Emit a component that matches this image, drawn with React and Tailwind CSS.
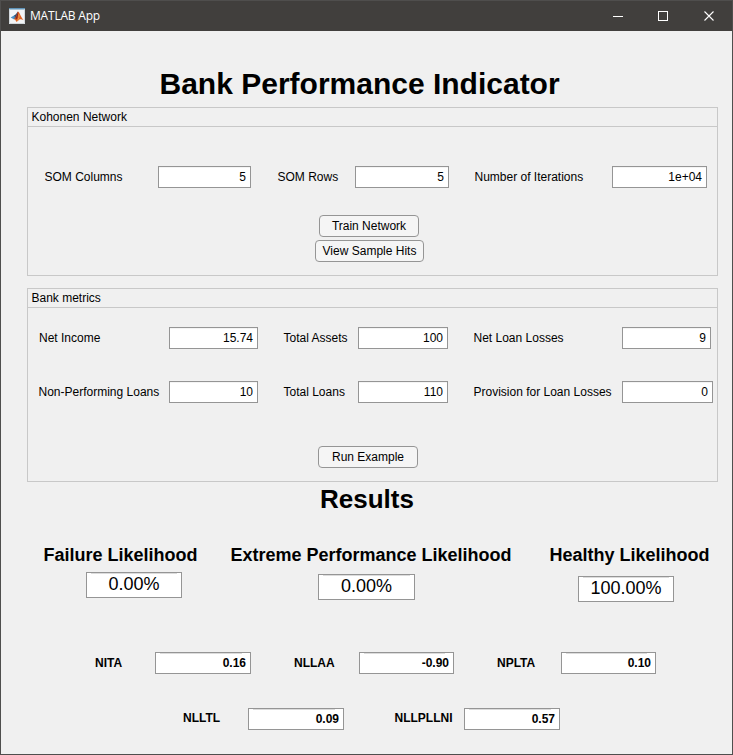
import React from 'react';

function Label({ className = '', children }) {
  return <span className={`shrink-0 whitespace-nowrap ${className}`}>{children}</span>;
}

function Field({ value, className = '' }) {
  return (
    <div
      className={`h-[22px] shrink-0 border border-[#959595] bg-white pr-1 text-right leading-5 shadow-[inset_0_1px_0_#f4f4f4] ${className}`}
    >
      {value}
    </div>
  );
}

function ReadOnlyField({ value, className = '' }) {
  return (
    <div className={`flex shrink-0 flex-col border border-[#959595] bg-white ${className}`}>
      <div className="mx-1 h-px shrink-0 bg-[#dcdcdc]" />
      <div className="-mt-px">{value}</div>
    </div>
  );
}

function Button({ className = '', children }) {
  return (
    <button
      className={`h-[22px] rounded-[4px] border border-[#959595] bg-[#f5f5f5] text-center leading-5 whitespace-nowrap ${className}`}
    >
      {children}
    </button>
  );
}

function Panel({ title, className = '', children }) {
  return (
    <section className={`ml-[26px] w-[691px] shrink-0 border border-[#c8c8c8] ${className}`}>
      <h2 className="h-[19px] border-b border-[#c8c8c8] pl-[3.5px] leading-[18px]">{title}</h2>
      {children}
    </section>
  );
}

function MatlabLogo() {
  return (
    <svg width="16" height="16" viewBox="0 0 16 16">
      <rect width="16" height="16" fill="#f3f5f7" />
      <rect width="16" height="1.5" fill="#5f93b8" />
      <path d="M0.5 1.5V15.5H15.5V1.5" fill="none" stroke="#d3d8dc" />
      <path d="M1.6 9.4L5 7.6L7 9.6L4.8 11.2Z" fill="#4a8fc4" />
      <path d="M5 7.6C7 7 7.6 4.6 9 3.6L7.6 9.8L4.8 11.2L6 9.2Z" fill="#2d4f74" />
      <path d="M9 3.6C10.8 4.6 12 9.4 14.6 12.2C12.8 11.2 11.6 10.8 10.4 11.6C9.2 12.6 8.4 13.6 7.2 13.8C6.8 12.2 6.2 11.4 4.8 11.2C7.4 9.8 7.8 5.6 9 3.6Z" fill="#df6428" />
      <path d="M9 3.6C9.5 5.2 9 9.2 7.8 11.4C7.4 10.8 6.8 10.8 6 10.6C7.8 9 8 5.4 9 3.6Z" fill="#8c2a1c" />
      <path d="M9.8 6.4C10.3 8.4 10 10.6 8.4 12.6" fill="none" stroke="#f5a94a" strokeWidth="0.9" />
    </svg>
  );
}

export default function App() {
  return (
    <div className="flex h-[755px] w-[733px] flex-col overflow-hidden border border-[#4f4e4d] bg-[#f0f0f0] font-['Liberation_Sans',Arial,sans-serif] text-[12px] text-black">
      <header className="flex h-[30px] shrink-0 items-center bg-[#413f3d] text-white">
        <div className="ml-2">
          <MatlabLogo />
        </div>
        <span className="ml-[5px] flex-1 font-['Open_Sans','Noto_Sans',sans-serif] text-[12px] leading-[30px] tracking-[-0.2px]">
          MATLAB App
        </span>
        <svg className="mr-[17px]" width="102" height="12" viewBox="0 0 102 12" fill="none" stroke="white">
          <path d="M0 6.5H10" />
          <rect x="45.5" y="1.5" width="9" height="9" />
          <path d="M91.5 1.5L100.5 10.5M100.5 1.5L91.5 10.5" strokeWidth="1.1" />
        </svg>
      </header>

      <h1 className="h-[76px] shrink-0 pt-[35px] pl-[158.5px] text-[30px] leading-[36px] font-bold whitespace-nowrap">
        Bank Performance Indicator
      </h1>

      <Panel title="Kohonen Network" className="h-[169px]">
        <div className="mt-[39px] flex leading-[22px]">
          <Label className="ml-[16.5px] w-[113.5px]">SOM Columns</Label>
          <Field value="5" className="w-[93px]" />
          <Label className="ml-[26.5px] w-[77.5px]">SOM Rows</Label>
          <Field value="5" className="w-[94px]" />
          <Label className="ml-[25.5px] w-[137.5px]">Number of Iterations</Label>
          <Field value="1e+04" className="w-[95px]" />
        </div>
        <div className="mt-[27px] ml-[287px] flex w-[109px] flex-col items-center gap-[3px]">
          <Button className="mr-[1px] w-[100px]">Train Network</Button>
          <Button className="w-[109px]">View Sample Hits</Button>
        </div>
      </Panel>

      <Panel title="Bank metrics" className="mt-3 h-[194px]">
        <div className="mt-[19px] flex leading-[22px]">
          <Label className="ml-[11px] w-[130px]">Net Income</Label>
          <Field value="15.74" className="w-[89px]" />
          <Label className="ml-[25.5px] w-[74.5px]">Total Assets</Label>
          <Field value="100" className="w-[90px]" />
          <Label className="ml-[25.5px] w-[148.5px]">Net Loan Losses</Label>
          <Field value="9" className="w-[89px]" />
        </div>
        <div className="mt-8 flex leading-[22px]">
          <Label className="ml-[10.5px] w-[130.5px]">Non-Performing Loans</Label>
          <Field value="10" className="w-[89px]" />
          <Label className="ml-[25.5px] w-[74.5px]">Total Loans</Label>
          <Field value="110" className="w-[90px]" />
          <Label className="ml-[25.5px] w-[148.5px]">Provision for Loan Losses</Label>
          <Field value="0" className="w-[91px]" />
        </div>
        <Button className="mt-[43px] ml-[290px] block w-[100px]">Run Example</Button>
      </Panel>

      <h2 className="h-[62px] shrink-0 pl-[319px] text-[26px] leading-[34px] font-bold">Results</h2>

      <div className="flex h-[108px] shrink-0 text-[18px]">
        <div className="ml-[42.5px] w-[187px]">
          <h3 className="h-[28px] leading-[22px] font-bold whitespace-nowrap">Failure Likelihood</h3>
          <ReadOnlyField value="0.00%" className="ml-[42.5px] h-[26px] w-[96px] text-center leading-[22px]" />
        </div>
        <div className="w-[319px]">
          <h3 className="h-[30px] leading-[22px] font-bold whitespace-nowrap">Extreme Performance Likelihood</h3>
          <ReadOnlyField value="0.00%" className="ml-[87.5px] h-[26px] w-[97px] text-center leading-[22px]" />
        </div>
        <div>
          <h3 className="h-[32px] leading-[22px] font-bold whitespace-nowrap">Healthy Likelihood</h3>
          <ReadOnlyField value="100.00%" className="ml-[28.5px] h-[26px] w-[96px] text-center leading-[22px]" />
        </div>
      </div>

      <div className="flex shrink-0 leading-[22px] font-bold">
        <Label className="ml-[94px] w-[60px]">NITA</Label>
        <ReadOnlyField value="0.16" className="h-[22px] w-[96px] pr-1 text-right leading-5" />
        <Label className="ml-[43px] w-[65px]">NLLAA</Label>
        <ReadOnlyField value="-0.90" className="h-[22px] w-[95px] pr-1 text-right leading-5" />
        <Label className="ml-[43px] w-[64px]">NPLTA</Label>
        <ReadOnlyField value="0.10" className="h-[22px] w-[95px] pr-1 text-right leading-5" />
      </div>

      <div className="mt-[34px] flex shrink-0 leading-5 font-bold">
        <Label className="ml-[182px] w-[65px]">NLLTL</Label>
        <ReadOnlyField value="0.09" className="h-[22px] w-[96px] pr-1 text-right leading-5" />
        <Label className="ml-[50.5px] w-[69.5px]">NLLPLLNI</Label>
        <ReadOnlyField value="0.57" className="h-[22px] w-[96px] pr-1 text-right leading-5" />
      </div>
    </div>
  );
}
